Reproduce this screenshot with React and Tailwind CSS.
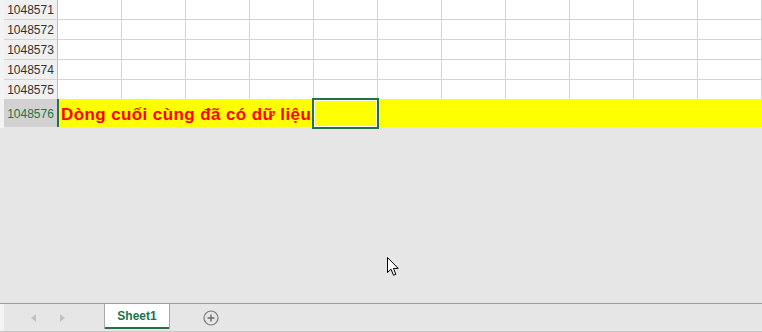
import React from "react";

const rows = ["1048571", "1048572", "1048573", "1048574", "1048575"];
const cols = Array.from({ length: 11 }, (_, i) => i);

const App = () => {
  return (
    <div
      className="relative w-[762px] h-[332px] overflow-hidden bg-[#e6e6e6] flex flex-col"
      style={{ fontFamily: '"Liberation Sans", Arial, sans-serif' }}
    >
      {/* sheet grid */}
      <div className="flex">
        <div className="w-[4px] bg-[#f3f3f3]" />
        <div className="flex flex-col">
          {rows.map((r, i) => (
            <div key={r} className={`flex ${i < 4 ? "h-[20px]" : "h-[19px]"}`}>
              <div
                className={`w-[54px] flex items-center justify-center bg-[#f0f0f0] border-r border-[#bdbdbd] text-[12px] text-[#333333] ${
                  i < 4 ? "border-b border-b-[#d4d4d4]" : ""
                }`}
              >
                {r}
              </div>
              {cols.map((c) => (
                <div
                  key={c}
                  className={`w-[64px] bg-white border-r border-[#d4d4d4] ${
                    i < 4 ? "border-b" : ""
                  }`}
                />
              ))}
            </div>
          ))}
          {/* last row */}
          <div className="flex h-[29px]">
            <div className="w-[53px] h-[28px] flex items-center justify-center pt-[2px] bg-[#d2d2d2] text-[12px] text-[#217346]">
              1048576
            </div>
            <div className="w-[2px] h-[28px] bg-[#217346]" />
            <div className="w-[703px] flex flex-col">
              <div className="h-[28px] bg-[#ffff00] flex items-end pb-[4px] pl-[2px]">
                <span className="text-[17px] font-bold tracking-[0.4px] text-[#ff0000] whitespace-nowrap leading-none">
                  Dòng cuối cùng đã có dữ liệu
                </span>
              </div>
              <div className="flex h-[1px]">
                {cols.map((c) => (
                  <div
                    key={c}
                    className={`${c === 0 ? "w-[63px]" : "w-[64px]"} border-r border-[#f0f0f0]`}
                  />
                ))}
              </div>
            </div>
          </div>
        </div>
      </div>

      {/* active cell outline */}
      <div className="absolute left-[312px] top-[98px] w-[67px] h-[31px] border-2 border-[#217346]">
        <div className="w-full h-full border border-white" />
      </div>

      <div className="flex-1" />

      {/* sheet tabs */}
      <div className="h-[29px] border-t border-[#9e9e9e] border-b border-b-[#c8c8c8] flex items-stretch">
        <div className="w-[4px] bg-[#f3f3f3]" />
        <div className="w-[100px] flex items-center pl-[27px] gap-[24px]">
          <svg width="5" height="8" viewBox="0 0 5 8">
            <path d="M5 0 L0 4 L5 8 Z" fill="#c2c2c2" />
          </svg>
          <svg width="5" height="8" viewBox="0 0 5 8">
            <path d="M0 0 L5 4 L0 8 Z" fill="#c2c2c2" />
          </svg>
        </div>
        <div className="w-[66px] h-[25px] flex flex-col bg-white border-x border-[#a8a8a8]">
          <div className="flex-1 flex items-center justify-center text-[12px] font-bold text-[#217346] pt-[1px]">
            Sheet1
          </div>
          <div className="h-[2px] bg-[#217346]" />
        </div>
        <div className="w-[82px] flex items-center justify-center">
          <svg width="16" height="16" viewBox="0 0 16 16">
            <circle cx="8" cy="8" r="7" fill="none" stroke="#7a7a7a" strokeWidth="1.2" />
            <path d="M8 4.5 V11.5 M4.5 8 H11.5" stroke="#6a6a6a" strokeWidth="1.4" />
          </svg>
        </div>
      </div>

      {/* mouse pointer */}
      <svg
        className="absolute left-[387px] top-[257px]"
        width="13"
        height="20"
        viewBox="0 0 13 20"
      >
        <path
          d="M0.5 0.5 L0.5 15.5 L4 12.2 L6.6 18.3 L8.9 17.3 L6.4 11.4 L11.2 11.4 Z"
          fill="#ffffff"
          stroke="#000000"
          strokeWidth="1"
          strokeLinejoin="miter"
        />
      </svg>
    </div>
  );
};

export default App;
